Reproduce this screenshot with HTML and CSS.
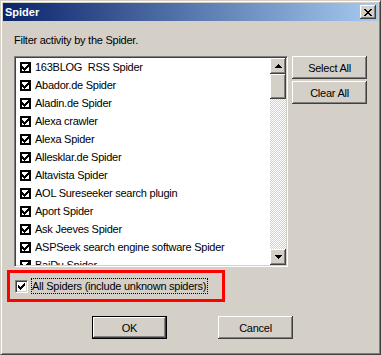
FILE: index.html
```html
<!DOCTYPE html>
<html lang="en">
<head>
    <meta charset="UTF-8">
    <title>Spider</title>
    <link rel="stylesheet" href="styles.css">
</head>
<body>
    <svg class="defs" width="0" height="0">
        <defs>
            <path id="check" d="M0 2h1v1h1v1h1v-1h1v-1h1v-1h1v-1h1v3h-1v1h-1v1h-1v1h-1v1h-1v-1h-1v-1h-1z"/>
            <path id="arrow-up" d="M3 0h1v1h1v1h1v1h1v1h-7v-1h1v-1h1v-1h1z"/>
            <path id="arrow-down" d="M0 0h7v1h-1v1h-1v1h-1v1h-1v-1h-1v-1h-1v-1h-1z"/>
        </defs>
    </svg>

    <div class="window">
        <!-- Başlık -->
        <div class="titlebar">
            <span class="title">Spider</span>
            <button class="close-btn">
                <svg width="8" height="7" viewBox="0 0 8 7"><path d="M0 0h2v1h-2zM6 0h2v1h-2zM1 1h2v1h-2zM5 1h2v1h-2zM2 2h4v1h-4zM3 3h2v1h-2zM2 4h4v1h-4zM1 5h2v1h-2zM5 5h2v1h-2zM0 6h2v1h-2zM6 6h2v1h-2z"/></svg>
            </button>
        </div>

        <div class="content">
            <p class="intro">Filter activity by the Spider.</p>

            <div class="main-row">
                <div class="listbox">
                    <ul class="items">
                        <li><span class="list-check"><svg width="7" height="7"><use href="#check"/></svg></span>163BLOG&nbsp; RSS Spider</li>
                        <li><span class="list-check"><svg width="7" height="7"><use href="#check"/></svg></span>Abador.de Spider</li>
                        <li><span class="list-check"><svg width="7" height="7"><use href="#check"/></svg></span>Aladin.de Spider</li>
                        <li><span class="list-check"><svg width="7" height="7"><use href="#check"/></svg></span>Alexa crawler</li>
                        <li><span class="list-check"><svg width="7" height="7"><use href="#check"/></svg></span>Alexa Spider</li>
                        <li><span class="list-check"><svg width="7" height="7"><use href="#check"/></svg></span>Allesklar.de Spider</li>
                        <li><span class="list-check"><svg width="7" height="7"><use href="#check"/></svg></span>Altavista Spider</li>
                        <li><span class="list-check"><svg width="7" height="7"><use href="#check"/></svg></span>AOL Sureseeker search plugin</li>
                        <li><span class="list-check"><svg width="7" height="7"><use href="#check"/></svg></span>Aport Spider</li>
                        <li><span class="list-check"><svg width="7" height="7"><use href="#check"/></svg></span>Ask Jeeves Spider</li>
                        <li><span class="list-check"><svg width="7" height="7"><use href="#check"/></svg></span>ASPSeek search engine software Spider</li>
                        <li><span class="list-check"><svg width="7" height="7"><use href="#check"/></svg></span>BaiDu Spider</li>
                    </ul>
                    <div class="scrollbar">
                        <div class="sb-btn"><svg width="7" height="4"><use href="#arrow-up"/></svg></div>
                        <div class="sb-thumb"></div>
                        <div class="sb-track"></div>
                        <div class="sb-btn"><svg width="7" height="4"><use href="#arrow-down"/></svg></div>
                    </div>
                </div>

                <div class="side-buttons">
                    <button class="btn">Select All</button>
                    <button class="btn">Clear All</button>
                </div>
            </div>

            <div class="highlight">
                <label class="all-spiders">
                    <span class="checkbox"><svg width="7" height="7"><use href="#check"/></svg></span>
                    <span class="focus-text">All Spiders (include unknown spiders)</span>
                </label>
            </div>

            <div class="dialog-buttons">
                <button class="btn default">OK</button>
                <button class="btn">Cancel</button>
            </div>
        </div>
    </div>
</body>
</html>
```

FILE: styles.css
```css
/* Sıfırlama */
* {
    margin: 0;
    padding: 0;
    box-sizing: border-box;
}

body {
    background-color: #d4d0c8;
    font-family: "Liberation Sans", Arial, sans-serif;
    font-size: 11px;
    letter-spacing: -0.25px;
    color: #000;
}

.defs {
    position: absolute;
    width: 0;
    height: 0;
}

/* Pencere */
.window {
    width: 381px;
    height: 355px;
    background-color: #d4d0c8;
    border: 1px solid;
    border-color: #d4d0c8 #404040 #404040 #d4d0c8;
    box-shadow: inset 1px 1px #fff, inset -1px -1px #808080;
    padding: 2px;
}

.titlebar {
    height: 18px;
    display: flex;
    align-items: center;
    justify-content: space-between;
    padding: 0 2px;
    background: linear-gradient(to right, #0a246a, #a6caf0);
}

.title {
    color: #fff;
    font-weight: bold;
    letter-spacing: 0;
}

.close-btn {
    width: 16px;
    height: 14px;
    border: none;
    background-color: #d4d0c8;
    box-shadow: inset -1px -1px #404040, inset 1px 1px #fff, inset -2px -2px #808080, inset 2px 2px #d4d0c8;
    display: flex;
    align-items: center;
    justify-content: center;
}

.content {
    padding: 13px 11px 0 11px;
}

.intro {
    line-height: 13px;
}

.main-row {
    display: flex;
    gap: 4px;
    margin-top: 9px;
}

/* Liste */
.listbox {
    width: 275px;
    height: 211px;
    display: flex;
    background-color: #fff;
    border: 1px solid;
    border-color: #808080 #fff #fff #808080;
    box-shadow: inset 1px 1px #404040, inset -1px -1px #d4d0c8;
    padding: 1px;
}

.items {
    flex: 1;
    list-style: none;
    overflow: hidden;
}

.items li {
    height: 18px;
    display: flex;
    align-items: center;
    padding-left: 4px;
    white-space: nowrap;
}

.list-check {
    width: 11px;
    height: 11px;
    border: 2px solid #000;
    display: flex;
    align-items: center;
    justify-content: center;
    margin-right: 4px;
    flex-shrink: 0;
}

.scrollbar {
    width: 16px;
    display: flex;
    flex-direction: column;
}

.sb-btn,
.sb-thumb {
    background-color: #d4d0c8;
    box-shadow: inset -1px -1px #404040, inset 1px 1px #fff, inset -2px -2px #808080, inset 2px 2px #d4d0c8;
}

.sb-btn {
    height: 16px;
    display: flex;
    align-items: center;
    justify-content: center;
}

.sb-thumb {
    height: 25px;
}

.sb-track {
    flex: 1;
    background-image: conic-gradient(#fff 25%, #d4d0c8 0 50%, #fff 0 75%, #d4d0c8 0);
    background-size: 2px 2px;
}

/* Düğmeler */
.side-buttons {
    display: flex;
    flex-direction: column;
    gap: 2px;
}

.btn {
    width: 75px;
    height: 23px;
    border: none;
    background-color: #d4d0c8;
    box-shadow: inset -1px -1px #404040, inset 1px 1px #fff, inset -2px -2px #808080, inset 2px 2px #d4d0c8;
    font: inherit;
    letter-spacing: inherit;
    color: #000;
}

.btn.default {
    border: 1px solid #000;
    box-shadow: inset -1px -1px #404040, inset 1px 1px #fff, inset -2px -2px #808080;
}

/* Kırmızı çerçeve */
.highlight {
    width: 218px;
    height: 32px;
    margin: 3px 0 0 -7px;
    border: 3px solid #f00;
    display: flex;
    align-items: center;
    padding-left: 5px;
}

.all-spiders {
    display: flex;
    align-items: center;
}

.checkbox {
    width: 13px;
    height: 13px;
    background-color: #fff;
    border: 1px solid;
    border-color: #808080 #fff #fff #808080;
    box-shadow: inset 1px 1px #404040, inset -1px -1px #d4d0c8;
    display: flex;
    align-items: center;
    justify-content: center;
    margin-right: 3px;
}

.focus-text {
    border: 1px dotted #000;
    line-height: 14px;
    padding: 0 1px 0 0;
}

.dialog-buttons {
    display: flex;
    gap: 51px;
    margin: 14px 0 0 78px;
}
```
